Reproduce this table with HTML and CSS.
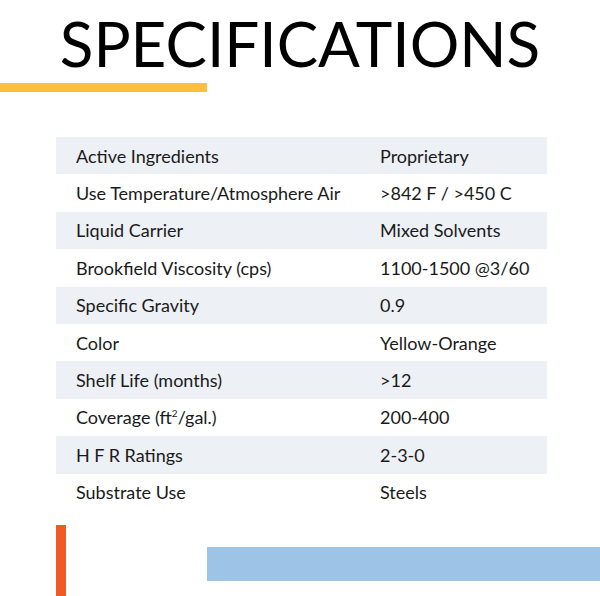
FILE: index.html
```html
<!DOCTYPE html>
<html>
<head>
<meta charset="utf-8">
<link rel="stylesheet" href="styles.css">
</head>
<body>
<div class="page">
  <h1 class="title">SPECIFICATIONS</h1>
  <div class="yellow-bar"></div>
  <div class="specs">
    <div class="row shade"><span class="k">Active Ingredients</span><span class="v">Proprietary</span></div>
    <div class="row"><span class="k">Use Temperature/Atmosphere Air</span><span class="v">&gt;842 F / &gt;450 C</span></div>
    <div class="row shade"><span class="k">Liquid Carrier</span><span class="v">Mixed Solvents</span></div>
    <div class="row"><span class="k">Brookfield Viscosity (cps)</span><span class="v">1100-1500 @3/60</span></div>
    <div class="row shade"><span class="k">Specific Gravity</span><span class="v">0.9</span></div>
    <div class="row"><span class="k">Color</span><span class="v">Yellow-Orange</span></div>
    <div class="row shade"><span class="k">Shelf Life (months)</span><span class="v">&gt;12</span></div>
    <div class="row"><span class="k">Coverage (ft<sup>2</sup>/gal.)</span><span class="v">200-400</span></div>
    <div class="row shade"><span class="k">H F R Ratings</span><span class="v">2-3-0</span></div>
    <div class="row"><span class="k">Substrate Use</span><span class="v">Steels</span></div>
  </div>
  <div class="footer">
    <div class="orange-bar"></div>
    <div class="blue-bar"></div>
  </div>
</div>
</body>
</html>
```
FILE: styles.css
```css
html, body {
  margin: 0;
  padding: 0;
  background: #fff;
}
.page {
  width: 600px;
  height: 596px;
  overflow: hidden;
  font-family: Lato, "Noto Sans", sans-serif;
  color: #1a1a1a;
}
.title {
  margin: 0;
  padding-top: 6px;
  height: 77px;
  text-align: center;
  font-weight: 400;
  font-size: 62px;
  line-height: 74px;
  color: #000;
  letter-spacing: 0;
}
.yellow-bar {
  width: 207px;
  height: 9px;
  background: #fdbd40;
}
.specs {
  margin: 45px 53px 0 56px;
  display: flex;
  flex-direction: column;
}
.row {
  display: flex;
  align-items: center;
  height: 37.4px;
  font-size: 18px;
}
.row.shade {
  background: #edf0f4;
}
.k {
  width: 304px;
  padding-left: 20px;
  box-sizing: border-box;
}
.v {
  padding-left: 20px;
}
sup {
  font-size: 10px;
  line-height: 0;
  vertical-align: 7px;
}
.footer {
  display: flex;
  align-items: flex-start;
  margin-top: 14px;
  height: 72px;
}
.orange-bar {
  margin-left: 56px;
  width: 10px;
  height: 72px;
  background: #f15a24;
}
.blue-bar {
  margin-left: 141px;
  margin-top: 22px;
  flex: 1;
  height: 34px;
  background: #9dc3e6;
}
```
